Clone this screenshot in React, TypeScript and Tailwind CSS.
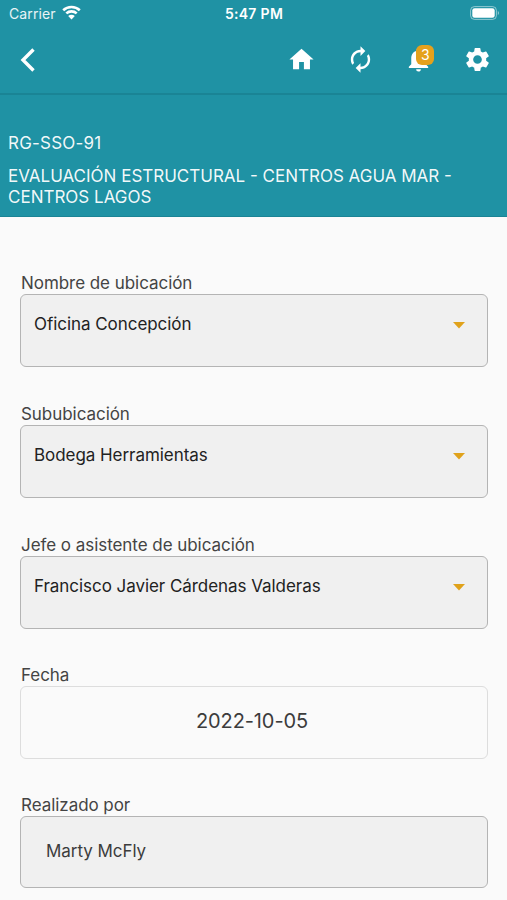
import { ReactNode } from "react";
import {
  MdAutorenew,
  MdHome,
  MdNotifications,
  MdSettings,
} from "react-icons/md";

interface SelectField {
  label: string;
  value: string;
}

const selects: SelectField[] = [
  { label: "Nombre de ubicación", value: "Oficina Concepción" },
  { label: "Sububicación", value: "Bodega Herramientas" },
  {
    label: "Jefe o asistente de ubicación",
    value: "Francisco Javier Cárdenas Valderas",
  },
];

function StatusBar() {
  return (
    <div className="grid h-[27px] grid-cols-3 items-center pl-[9px] pr-[7px] text-[14px] leading-none">
      <div className="flex items-center gap-[6px]">
        <span className="tracking-[0.1px] text-white/90">Carrier</span>
        <svg
          className="-mt-[2px]"
          width="19"
          height="15"
          viewBox="0 0 19 15"
          fill="none"
        >
          <path
            d="M1.2 5.2C5.8 .9 13.2 .9 17.8 5.2M4.3 8.4c2.9-2.7 7.5-2.7 10.4 0"
            stroke="white"
            strokeWidth="2.6"
          />
          <path
            d="M9.5 14.4 6.2 11.1c1.8-1.7 4.8-1.7 6.6 0Z"
            fill="white"
          />
        </svg>
      </div>
      <span className="-ml-px text-center font-semibold tracking-[0.3px]">
        5:47 PM
      </span>
      <svg
        className="-mt-px justify-self-end"
        width="30"
        height="14"
        viewBox="0 0 30 14"
        fill="none"
      >
        <rect
          x="0.6"
          y="0.6"
          width="25.8"
          height="12.8"
          rx="3.8"
          stroke="white"
          strokeOpacity="0.5"
        />
        <rect x="2.3" y="2.3" width="22.4" height="9.4" rx="2.3" fill="white" />
        <path d="M27.8 5v4c1.6-.6 1.6-3.4 0-4Z" fill="white" fillOpacity="0.5" />
      </svg>
    </div>
  );
}

function NavBar() {
  return (
    <nav className="flex h-[68px] items-center justify-between border-b-2 border-[#1a8495] pb-[1px] pl-[20px] pr-[15px]">
      <button aria-label="Volver">
        <svg width="16" height="26" viewBox="0 0 16 26" fill="none">
          <path d="M13.5 2.5 3 13l10.5 10.5" stroke="white" strokeWidth="3.4" />
        </svg>
      </button>
      <div className="flex items-center gap-[29.6px]">
        <MdHome size={29} />
        <MdAutorenew size={29} />
        <div className="relative">
          <MdNotifications size={29} />
          <span className="absolute -top-[0.5px] left-[12px] flex h-[20px] w-[18px] items-center justify-center rounded-[6px] bg-[#e5a11c] text-[14px] leading-none">
            3
          </span>
        </div>
        <MdSettings size={29} />
      </div>
    </nav>
  );
}

function Field({ label, children }: { label: string; children: ReactNode }) {
  return (
    <div className="flex flex-col">
      <label className="h-[22px] pl-px text-[17px] leading-[22px] tracking-[-0.05px] text-[#444444]">
        {label}
      </label>
      {children}
    </div>
  );
}

export default function App() {
  return (
    <div className="flex h-[900px] w-full flex-col overflow-hidden bg-[#fafafa] font-['Inter',sans-serif]">
      <header className="h-[217px] shrink-0 border-b border-[#1a8495] bg-[#1f92a4] text-white">
        <StatusBar />
        <NavBar />
        <div className="px-[8px] pt-[38px] text-[17px] leading-[21px] text-white/95">
          <p className="tracking-[0.2px]">RG-SSO-91</p>
          <h1 className="mt-[12px]">
            EVALUACIÓN ESTRUCTURAL - CENTROS AGUA MAR - CENTROS LAGOS
          </h1>
        </div>
      </header>

      <main className="flex flex-col gap-[35px] px-[20px] pt-[55px]">
        <div className="flex flex-col gap-9">
          {selects.map((field) => (
            <Field key={field.label} label={field.label}>
              <div className="flex h-[73px] w-[468px] items-start justify-between rounded-[6px] border border-[#b4b4b4] bg-[#f0f0f0] pl-[13px] pr-[22px] pt-[18px] text-[17px] leading-[22px] tracking-[-0.05px] text-[#222222]">
                <span>{field.value}</span>
                <svg
                  className="mt-[8.5px]"
                  width="12"
                  height="7"
                  viewBox="0 0 12 7"
                >
                  <path d="M0 0h12L6 6.5Z" fill="#e0a21b" />
                </svg>
              </div>
            </Field>
          ))}
        </div>

        <Field label="Fecha">
          <div className="flex h-[73px] w-[468px] items-center justify-center rounded-[6px] border border-[#dddddd] pb-[3px] pr-[4px] text-[20px] tracking-[-0.1px] text-[#3c3c3c]">
            2022-10-05
          </div>
        </Field>

        <Field label="Realizado por">
          <div className="flex h-[72px] w-[468px] items-center rounded-[6px] border border-[#b4b4b4] bg-[#f0f0f0] pl-[25px] text-[17px] tracking-[-0.05px] text-[#3c3c3c]">
            Marty McFly
          </div>
        </Field>
      </main>
    </div>
  );
}
